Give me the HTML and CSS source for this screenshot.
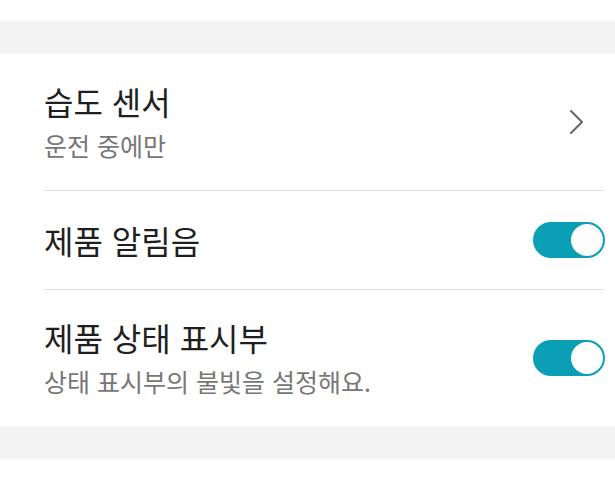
FILE: index.html
```html
<!DOCTYPE html>
<html lang="ko">
<head>
  <meta charset="UTF-8" />
  <meta name="viewport" content="width=device-width, initial-scale=1" />
  <title>설정</title>
  <link rel="stylesheet" href="styles.css">
</head>
<body>

  <div class="top-space"></div>
  <div class="band"></div>

  <ul class="settings">
    <li class="row">
      <div class="text">
        <div class="title">습도 센서</div>
        <div class="sub">운전 중에만</div>
      </div>
      <svg class="chevron" width="16" height="26" viewBox="0 0 16 26" aria-hidden="true">
        <polyline points="2,2 13,13 2,24" fill="none" stroke="#666" stroke-width="2" stroke-linecap="round" stroke-linejoin="round" />
      </svg>
    </li>
    <li class="row single">
      <div class="text">
        <div class="title">제품 알림음</div>
      </div>
      <span class="toggle on"><span class="knob"></span></span>
    </li>
    <li class="row">
      <div class="text">
        <div class="title">제품 상태 표시부</div>
        <div class="sub">상태 표시부의 불빛을 설정해요.</div>
      </div>
      <span class="toggle on"><span class="knob"></span></span>
    </li>
  </ul>

  <div class="band"></div>

</body>
</html>
```

FILE: styles.css
```css
body {
  margin: 0;
  background: #fff;
  font-family: "Noto Sans CJK KR", "Noto Sans", sans-serif;
  color: #222;
}
.top-space {
  height: 21px;
}
.band {
  height: 33px;
  background-color: #f4f4f4;
}
.settings {
  list-style: none;
  margin: 0;
  padding: 0 10px 0 43px;
}
.row {
  display: flex;
  align-items: center;
  justify-content: space-between;
  padding: 27px 0;
  border-bottom: 1px solid #dedede;
}
.row.single {
  padding: 29px 0;
}
.row:last-child {
  border-bottom: none;
}
.text {
  padding-left: 1px;
}
.title {
  font-size: 32px;
  line-height: 40px;
  color: #1f1f1f;
}
.sub {
  margin-top: 7px;
  font-size: 25px;
  line-height: 35px;
  color: #777;
}
.chevron {
  margin-right: 20px;
}
.toggle {
  position: relative;
  display: inline-block;
  width: 72px;
  height: 36px;
  border-radius: 18px;
  background-color: #0a9fb4;
}
.knob {
  position: absolute;
  top: 2px;
  right: 2px;
  width: 32px;
  height: 32px;
  border-radius: 50%;
  background: #fff;
}
```
